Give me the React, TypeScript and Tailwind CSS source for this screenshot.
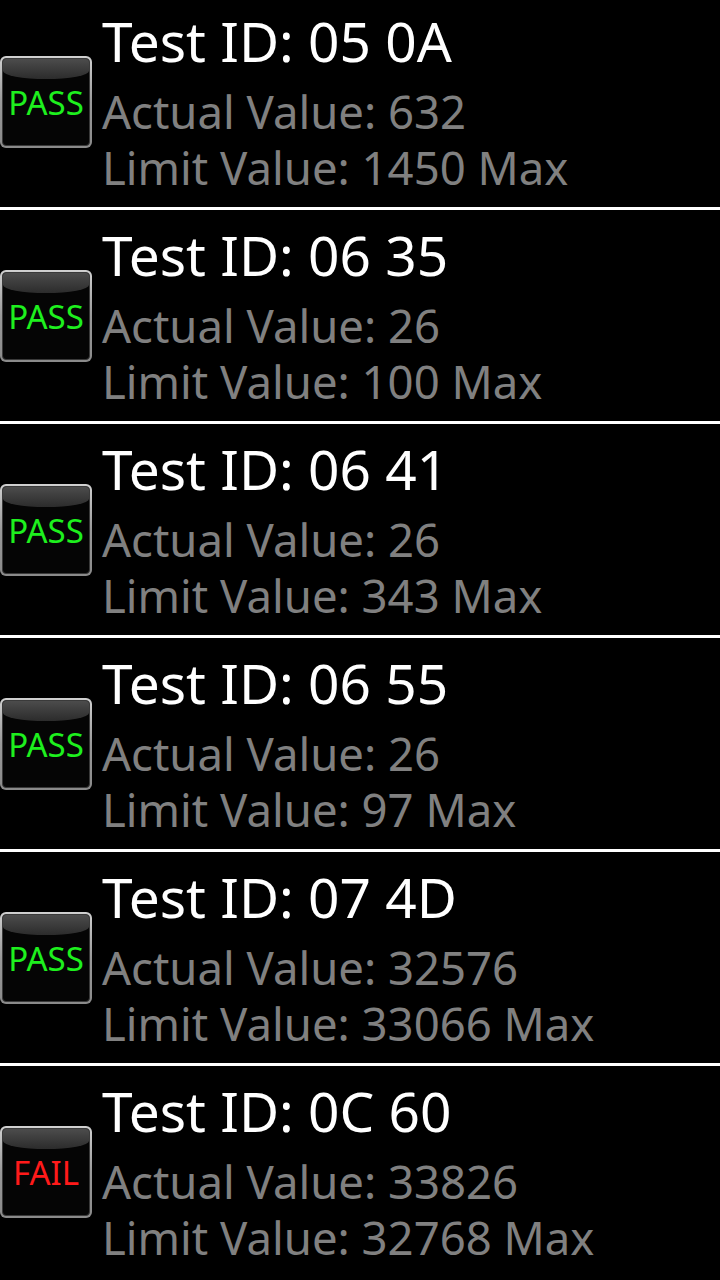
import React from "react";

type Row = { id: string; actual: string; limit: string; pass: boolean };

const rows: Row[] = [
  { id: "05 0A", actual: "632", limit: "1450 Max", pass: true },
  { id: "06 35", actual: "26", limit: "100 Max", pass: true },
  { id: "06 41", actual: "26", limit: "343 Max", pass: true },
  { id: "06 55", actual: "26", limit: "97 Max", pass: true },
  { id: "07 4D", actual: "32576", limit: "33066 Max", pass: true },
  { id: "0C 60", actual: "33826", limit: "32768 Max", pass: false },
];

function Badge({ pass }: { pass: boolean }) {
  return (
    <div className="relative w-[92px] h-[92px] shrink-0 rounded-[6px] bg-gradient-to-b from-[#d0d0d0] via-[#9a9a9a] to-[#8a8a8a] p-[2px]">
      <div className="relative w-full h-full rounded-[4px] bg-[#050505] overflow-hidden border border-[#3a3a3a]">
        <div className="absolute left-0 right-0 top-0 h-[20px] bg-gradient-to-b from-[#4c4c4c] to-[#2c2c2c] rounded-b-[50%_8px]" />
        <div
          className={
            "absolute inset-0 flex items-center justify-center text-[33px] leading-none pt-[2px] " +
            (pass ? "text-[#1ef01e]" : "text-[#ff1a1a]")
          }
          style={{ fontFamily: '"Noto Sans", "Open Sans", sans-serif' }}
        >
          {pass ? "PASS" : "FAIL"}
        </div>
      </div>
    </div>
  );
}

export default function App() {
  return (
    <div
      className="w-[720px] h-[1280px] bg-black overflow-hidden"
      style={{ fontFamily: '"Noto Sans", "Open Sans", sans-serif' }}
    >
      <div className="-mt-[4px] flex flex-col">
        {rows.map((r, i) => (
          <React.Fragment key={r.id}>
            {i > 0 && <div className="h-[3px] bg-white w-full" />}
            <div className="h-[211px] flex items-center">
              <Badge pass={r.pass} />
              <div className="self-start pt-[3px] pl-[10px] flex flex-col whitespace-nowrap">
                <div className="text-white text-[55px] leading-[84px]">Test ID: {r.id}</div>
                <div className="text-[#808080] text-[45.5px] leading-[56px]">Actual Value: {r.actual}</div>
                <div className="text-[#808080] text-[45.5px] leading-[56px]">Limit Value: {r.limit}</div>
              </div>
            </div>
          </React.Fragment>
        ))}
      </div>
    </div>
  );
}
